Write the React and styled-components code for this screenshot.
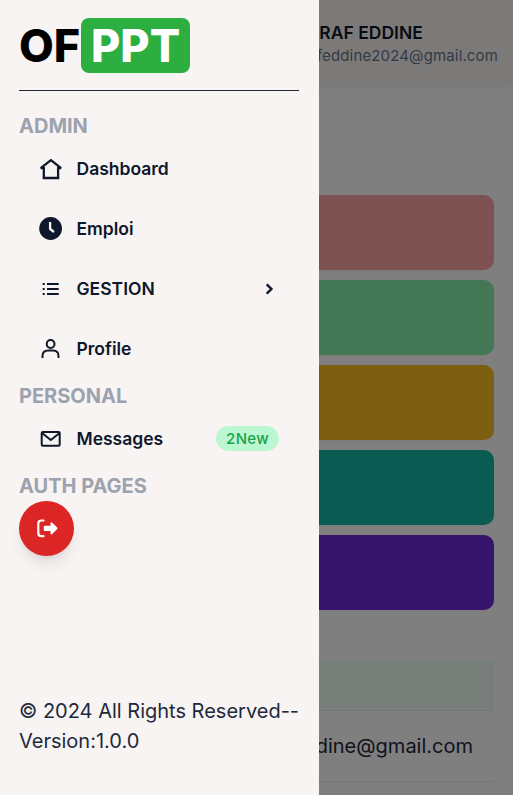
import React from "react";
import styled, { createGlobalStyle } from "styled-components";

const Global = createGlobalStyle`
  *, *::before, *::after { box-sizing: border-box; }
  html { font-size: 20px; }
  body { margin: 0; height: 795px; overflow: hidden; background: #fff; color: #1e293b; font-family: Inter, sans-serif; }
`;
const Page = styled.main`
  height: 795px;
  overflow: hidden;
  padding-right: 19px;
`;
const Header = styled.header`
  height: 85px;
  margin-right: -19px;
  padding: 20px 15px 0 0;
  background: #f8f4f3;
  box-shadow: 0 2px 8px -3px rgb(0 0 0 / .14);
  display: flex;
  justify-content: flex-end;
`;
const UserName = styled.div`
  font-size: 17.5px;
  line-height: 25px;
  font-weight: 600;
  color: #0f172a;
`;
const UserMail = styled.div`
  margin-left: -1px;
  font-size: 15px;
  line-height: 22px;
  letter-spacing: 0.14px;
  color: #64748b;
`;
const Cards = styled.section`
  display: grid;
  gap: 10px;
  margin-top: 110px;
`;
const Card = styled.div`
  height: 75px;
  border-radius: 10px;
  background: ${(p) => p.$color};
  box-shadow: 0 1px 2px rgb(0 0 0 / .05);
`;
const Table = styled.section`
  margin-top: 50px;
`;
const TableHead = styled.div`
  height: 51px;
  background: #f0fdf4;
  border-bottom: 1px solid #e2e8f0;
`;
const TableRow = styled.div`
  height: 71px;
  border-bottom: 1px solid #e2e8f0;
  padding-right: 21px;
  display: flex;
  align-items: center;
  justify-content: flex-end;
  font-size: 20px;
`;
const Backdrop = styled.div`
  position: fixed;
  inset: 0;
  background: rgb(0 0 0 / .5);
`;
const Sidebar = styled.aside`
  position: fixed;
  inset: 0 auto 0 0;
  width: 319px;
  padding: 18px 20px 39px 19px;
  background: #f8f4f3;
  display: flex;
  flex-direction: column;
`;
const Logo = styled.div`
  height: 73px;
  border-bottom: 1px solid #1e293b;
  display: flex;
  align-items: flex-start;
  font-size: 45px;
  line-height: 55px;
  font-weight: 800;
  color: #000;
`;
const LogoText = styled.span`
  width: 62px;
`;
const LogoTile = styled.span`
  height: 55px;
  width: 109px;
  padding-left: 10px;
  border-radius: 8px;
  background: #2dae41;
  color: #fff;
`;
const Nav = styled.nav`
  flex: 1;
  padding-top: 20px;
`;
const Heading = styled.h2`
  margin: 0;
  font-size: 20px;
  line-height: 30px;
  font-weight: 700;
  color: #9ca3af;
`;
const Item = styled.a`
  height: 60px;
  padding: 13px 20px 0;
  display: flex;
  align-items: flex-start;
  color: #0f172a;
  font-size: 17.5px;
  line-height: 30px;
  font-weight: 600;
`;
const Icon = styled.svg`
  width: 24px;
  height: 24px;
  margin: 3px 13.5px 0 0;
  flex: none;
  fill: none;
  stroke: currentColor;
  stroke-width: 2;
`;
const Arrow = styled(Icon)`
  width: 20px;
  height: 20px;
  margin: 5px 0 0;
  stroke-width: 2.4;
`;
const Label = styled.span`
  flex: 1;
`;
const Badge = styled.span`
  width: 63px;
  height: 25px;
  margin-top: 2px;
  border-radius: 13px;
  background: #bbf7d0;
  color: #16a34a;
  font-size: 15px;
  line-height: 25px;
  font-weight: 500;
  letter-spacing: 0.3px;
  text-align: center;
`;
const Logout = styled.button`
  width: 55px;
  height: 55px;
  padding: 0 0 0 1px;
  border: 0;
  border-radius: 50%;
  background: #dc2626;
  box-shadow: 0 10px 15px -3px rgb(0 0 0 / .1), 0 4px 6px -4px rgb(0 0 0 / .1);
  display: flex;
  align-items: center;
  justify-content: center;
`;
const Footer = styled.footer`
  font-size: 20px;
  line-height: 30px;
  white-space: nowrap;
`;

const HomeIcon = () => (
  <Icon viewBox="0 0 24 24">
    <path d="M1.7 11.2L11.9 3.2L22.1 11.2M1.5 11.1H4.8V21H19.1V11.1H22.3" strokeWidth="2.3" />
  </Icon>
);
const ClockIcon = () => (
  <Icon viewBox="0 0 24 24">
    <circle cx="11.6" cy="11.5" r="11.4" fill="currentColor" stroke="none" />
    <path d="M11.1 4.9V12L15 15" stroke="#f8f4f3" strokeWidth="2.3" />
  </Icon>
);
const ListIcon = () => (
  <Icon viewBox="0 0 24 24">
    <path d="M3.7 7h2M3.7 12h2M3.7 17h2M8 7h11.7M8 12h11.7M8 17h11.7" />
  </Icon>
);
const UserIcon = () => (
  <Icon viewBox="0 0 24 24">
    <circle cx="11.6" cy="7" r="3.9" />
    <path d="M3.5 21V19.2Q3.5 13.6 9 13.6H14.2Q19.5 13.6 19.5 19.2V21" />
  </Icon>
);
const MailIcon = () => (
  <Icon viewBox="0 0 24 24">
    <rect x="2.7" y="4.9" width="18" height="13.8" rx="1.2" />
    <path d="M3.3 6.3L11.8 13L20.3 6.3" />
  </Icon>
);
const LogoutIcon = () => (
  <svg width="21" height="19" viewBox="0 0 21 19" fill="none">
    <path d="M6.5 1.5H4.5Q1.3 1.5 1.3 4.5V14Q1.3 17.2 4.5 17.2H6.5" stroke="#fff" strokeWidth="2.2" strokeLinecap="round" />
    <path d="M7.5 6.7h6V4Q14.2 2.8 15.3 3.7L20.2 8.6Q20.8 9.4 20.2 10.1L15.3 15.1Q14.2 15.9 13.5 14.7V12h-6Q6.8 12 6.8 11.3V7.4Q6.8 6.7 7.5 6.7Z" fill="#fff" />
  </svg>
);

const cardColors = ["#fca5a5", "#86efac", "#fbbf24", "#14b8a6", "#6d28d9"];

export default function App() {
  return (
    <>
      <Global />
      <Page>
        <Header>
          <div>
            <UserName>ACHARAF EDDINE</UserName>
            <UserMail>acharafeddine2024@gmail.com</UserMail>
          </div>
        </Header>
        <Cards>{cardColors.map((c) => <Card key={c} $color={c} />)}</Cards>
        <Table>
          <TableHead />
          <TableRow>acharafeddine@gmail.com</TableRow>
        </Table>
      </Page>
      <Backdrop />
      <Sidebar>
        <Logo><LogoText>OF</LogoText><LogoTile>PPT</LogoTile></Logo>
        <Nav>
          <Heading>ADMIN</Heading>
          <Item><HomeIcon /><Label>Dashboard</Label></Item>
          <Item><ClockIcon /><Label>Emploi</Label></Item>
          <Item>
            <ListIcon />
            <Label>GESTION</Label>
            <Arrow viewBox="0 0 20 20"><path d="M7.7 5.4L12.4 10L7.7 14.6" /></Arrow>
          </Item>
          <Item><UserIcon /><Label>Profile</Label></Item>
          <Heading>PERSONAL</Heading>
          <Item><MailIcon /><Label>Messages</Label><Badge>2New</Badge></Item>
          <Heading>AUTH PAGES</Heading>
          <Logout aria-label="Log out"><LogoutIcon /></Logout>
        </Nav>
        <Footer>© 2024 All Rights Reserved--<br />Version:1.0.0</Footer>
      </Sidebar>
    </>
  );
}
